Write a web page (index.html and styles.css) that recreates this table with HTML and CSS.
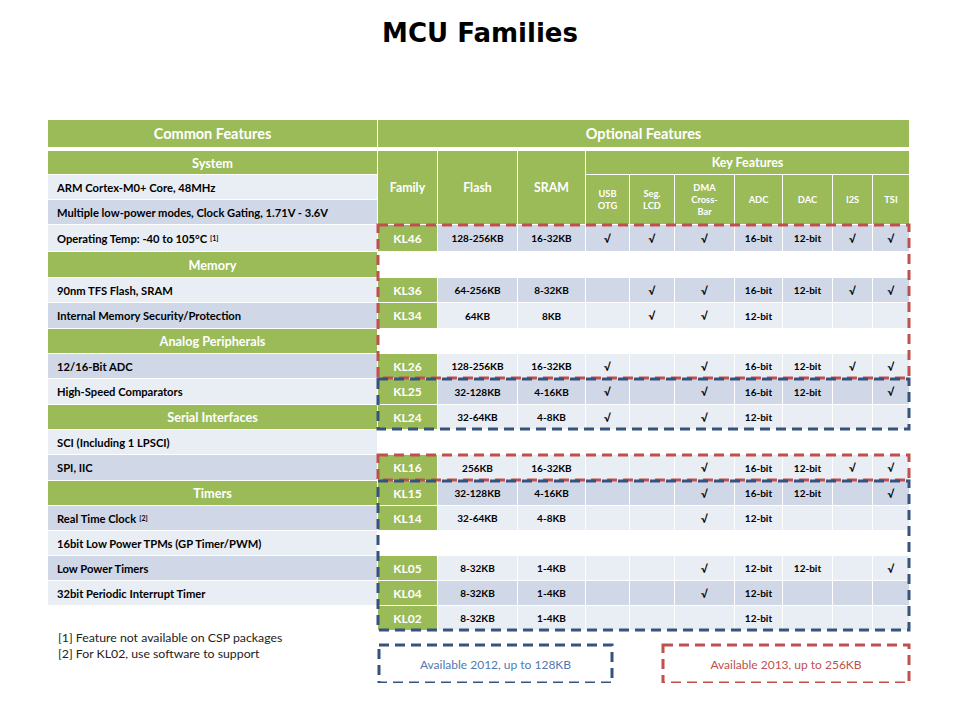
FILE: index.html
```html
<!DOCTYPE html>
<html>
<head>
<meta charset="utf-8">
<title>MCU Families</title>
<link rel="stylesheet" href="styles.css">
</head>
<body>
<h1 class="title">MCU Families</h1>
<div class="board">
  <div class="grid">
    <div class="hd">Common Features</div>
    <div class="hd hd-opt">Optional Features</div>

    <div class="sec">System</div>
    <div class="th th-main">Family</div>
    <div class="th th-main">Flash</div>
    <div class="th th-main">SRAM</div>
    <div class="th th-key">Key Features</div>

    <div class="feat lt">ARM Cortex-M0+ Core, 48MHz</div>
    <div class="th th-sub">USB<br>OTG</div>
    <div class="th th-sub">Seg.<br>LCD</div>
    <div class="th th-sub">DMA<br>Cross-<br>Bar</div>
    <div class="th th-sub">ADC</div>
    <div class="th th-sub">DAC</div>
    <div class="th th-sub">I2S</div>
    <div class="th th-sub">TSI</div>

    <div class="feat dk">Multiple low-power modes, Clock Gating, 1.71V - 3.6V</div>

    <div class="feat lt">Operating Temp: -40 to 105°C <sup class="ref">[1]</sup></div>
    <div class="kl dk"><div class="fam">KL46</div><div>128-256KB</div><div>16-32KB</div><div class="ck">√</div><div class="ck">√</div><div class="ck">√</div><div>16-bit</div><div>12-bit</div><div class="ck">√</div><div class="ck">√</div></div>

    <div class="sec">Memory</div>
    <div class="blank"></div>

    <div class="feat lt">90nm TFS Flash, SRAM</div>
    <div class="kl dk"><div class="fam">KL36</div><div>64-256KB</div><div>8-32KB</div><div></div><div class="ck">√</div><div class="ck">√</div><div>16-bit</div><div>12-bit</div><div class="ck">√</div><div class="ck">√</div></div>

    <div class="feat dk">Internal Memory Security/Protection</div>
    <div class="kl lt"><div class="fam">KL34</div><div>64KB</div><div>8KB</div><div></div><div class="ck">√</div><div class="ck">√</div><div>12-bit</div><div></div><div></div><div></div></div>

    <div class="sec">Analog Peripherals</div>
    <div class="blank"></div>

    <div class="feat dk">12/16-Bit ADC</div>
    <div class="kl lt"><div class="fam">KL26</div><div>128-256KB</div><div>16-32KB</div><div class="ck">√</div><div></div><div class="ck">√</div><div>16-bit</div><div>12-bit</div><div class="ck">√</div><div class="ck">√</div></div>

    <div class="feat lt">High-Speed Comparators</div>
    <div class="kl dk"><div class="fam">KL25</div><div>32-128KB</div><div>4-16KB</div><div class="ck">√</div><div></div><div class="ck">√</div><div>16-bit</div><div>12-bit</div><div></div><div class="ck">√</div></div>

    <div class="sec">Serial Interfaces</div>
    <div class="kl lt"><div class="fam">KL24</div><div>32-64KB</div><div>4-8KB</div><div class="ck">√</div><div></div><div class="ck">√</div><div>12-bit</div><div></div><div></div><div></div></div>

    <div class="feat lt">SCI (Including 1 LPSCI)</div>
    <div class="blank"></div>

    <div class="feat dk">SPI, IIC</div>
    <div class="kl lt"><div class="fam">KL16</div><div>256KB</div><div>16-32KB</div><div></div><div></div><div class="ck">√</div><div>16-bit</div><div>12-bit</div><div class="ck">√</div><div class="ck">√</div></div>

    <div class="sec">Timers</div>
    <div class="kl dk"><div class="fam">KL15</div><div>32-128KB</div><div>4-16KB</div><div></div><div></div><div class="ck">√</div><div>16-bit</div><div>12-bit</div><div></div><div class="ck">√</div></div>

    <div class="feat dk">Real Time Clock <sup class="ref">[2]</sup></div>
    <div class="kl lt"><div class="fam">KL14</div><div>32-64KB</div><div>4-8KB</div><div></div><div></div><div class="ck">√</div><div>12-bit</div><div></div><div></div><div></div></div>

    <div class="feat lt">16bit Low Power TPMs (GP Timer/PWM)</div>
    <div class="blank"></div>

    <div class="feat dk">Low Power Timers</div>
    <div class="kl lt"><div class="fam">KL05</div><div>8-32KB</div><div>1-4KB</div><div></div><div></div><div class="ck">√</div><div>12-bit</div><div>12-bit</div><div></div><div class="ck">√</div></div>

    <div class="feat lt">32bit Periodic Interrupt Timer</div>
    <div class="kl dk"><div class="fam">KL04</div><div>8-32KB</div><div>1-4KB</div><div></div><div></div><div class="ck">√</div><div>12-bit</div><div></div><div></div><div></div></div>

    <div class="empty"></div>
    <div class="kl lt"><div class="fam">KL02</div><div>8-32KB</div><div>1-4KB</div><div></div><div></div><div></div><div>12-bit</div><div></div><div></div><div></div></div>

    <div class="box box-a red"><svg><rect x="0" y="0" width="100%" height="100%"/></svg></div>
    <div class="box box-b blue"><svg><rect x="0" y="0" width="100%" height="100%"/></svg></div>
    <div class="box box-c red"><svg><rect x="0" y="0" width="100%" height="100%"/></svg></div>
    <div class="box box-d blue"><svg><rect x="0" y="0" width="100%" height="100%"/></svg></div>
  </div>

  <div class="below">
    <div class="notes">
      <div>[1] Feature not available on CSP packages</div>
      <div>[2] For KL02, use software to support</div>
    </div>
    <div class="legend">
      <div class="lbox lbox-blue blue">Available 2012, up to 128KB<svg><rect x="0" y="0" width="100%" height="100%"/></svg></div>
      <div class="lbox lbox-red red">Available 2013, up to 256KB<svg><rect x="0" y="0" width="100%" height="100%"/></svg></div>
    </div>
  </div>
</div>
</body>
</html>
```

FILE: styles.css
```css
body {
  margin: 0;
  background: #ffffff;
  font-family: "Lato", "DejaVu Sans", sans-serif;
  color: #000;
}

.title {
  margin: 0;
  padding-top: 17px;
  height: 32px;
  line-height: 32px;
  text-align: center;
  font-family: "DejaVu Sans", sans-serif;
  font-weight: bold;
  font-size: 26px;
  color: #000;
}

.board {
  margin: 71px 0 0 48px;
  width: 861px;
}

.grid {
  position: relative;
  display: grid;
  grid-template-columns: 329px 59px 79px 67px 43px 44px 59px 47px 49px 39px 36px;
  grid-template-rows: 30px 23px 24px 24px 26px 25px 24px 25px 24px 24px 25px 24px 24px 25px 24px 24px 24px 24px 24px 24px;
  column-gap: 1px;
  row-gap: 1px;
}

.hd {
  align-self: start;
  height: 27px;
  background: #9bbb59;
  color: #fff;
  font-weight: 700;
  font-size: 14.5px;
  display: flex;
  align-items: center;
  justify-content: center;
}

.hd-opt {
  grid-column: span 10;
}

.sec {
  background: #9bbb59;
  color: #fff;
  font-weight: 700;
  font-size: 12.7px;
  display: flex;
  align-items: center;
  justify-content: center;
}

.feat {
  padding-left: 9px;
  font-weight: 700;
  font-size: 11.2px;
  display: flex;
  align-items: center;
  white-space: nowrap;
}

.lt { background: #e9edf4; }
.dk { background: #d0d8e8; }

.ref {
  font-size: 7px;
  vertical-align: 4px;
  margin-left: 3px;
}

.th {
  background: #9bbb59;
  color: #fff;
  font-weight: 700;
  text-align: center;
  display: flex;
  align-items: center;
  justify-content: center;
}

.th-main {
  grid-row: span 3;
  font-size: 12.3px;
}

.th-key {
  grid-column: span 7;
  font-size: 12.5px;
}

.th-sub {
  grid-row: span 2;
  font-size: 9.3px;
  line-height: 12px;
}

.kl {
  display: contents;
}

.kl > div {
  display: flex;
  align-items: center;
  justify-content: center;
  font-weight: 700;
  font-size: 10px;
}

.kl.lt > div { background: #e9edf4; }
.kl.dk > div { background: #d0d8e8; }

.kl > .fam {
  background: #9bbb59 !important;
  color: #fff;
  font-size: 12px;
}

.kl > .ck {
  font-size: 11px;
}

.blank {
  grid-column: span 10;
}

.box {
  position: absolute;
  inset: 0;
  z-index: 2;
  pointer-events: none;
}

.box svg,
.lbox svg {
  display: block;
  width: 100%;
  height: 100%;
  overflow: visible;
}

.box rect,
.lbox rect {
  fill: none;
  stroke-width: 3;
  stroke-dasharray: 10 6;
}

.red rect { stroke: #c0504d; }
.blue rect { stroke: #37527c; }

.box-a { grid-column: 2 / -1; grid-row: 5 / 11; }
.box-b { grid-column: 2 / -1; grid-row: 11 / 13; }
.box-c { grid-column: 2 / -1; grid-row: 14 / 15; }
.box-d { grid-column: 2 / -1; grid-row: 15 / 21; }

.below {
  display: flex;
}

.notes {
  width: 329px;
  box-sizing: border-box;
  padding-left: 10px;
  font-size: 12.3px;
  line-height: 16px;
  color: #222;
}

.legend {
  flex: 1;
  display: flex;
  justify-content: space-between;
  margin-top: 15px;
  padding-left: 2px;
}

.lbox {
  position: relative;
  height: 38px;
  display: flex;
  align-items: center;
  justify-content: center;
  font-size: 12px;
}

.lbox svg {
  position: absolute;
  left: 0;
  top: 0;
}

.lbox-blue {
  width: 233px;
  color: #4f79b3;
}

.lbox-red {
  width: 246px;
  color: #c0504d;
}
```
